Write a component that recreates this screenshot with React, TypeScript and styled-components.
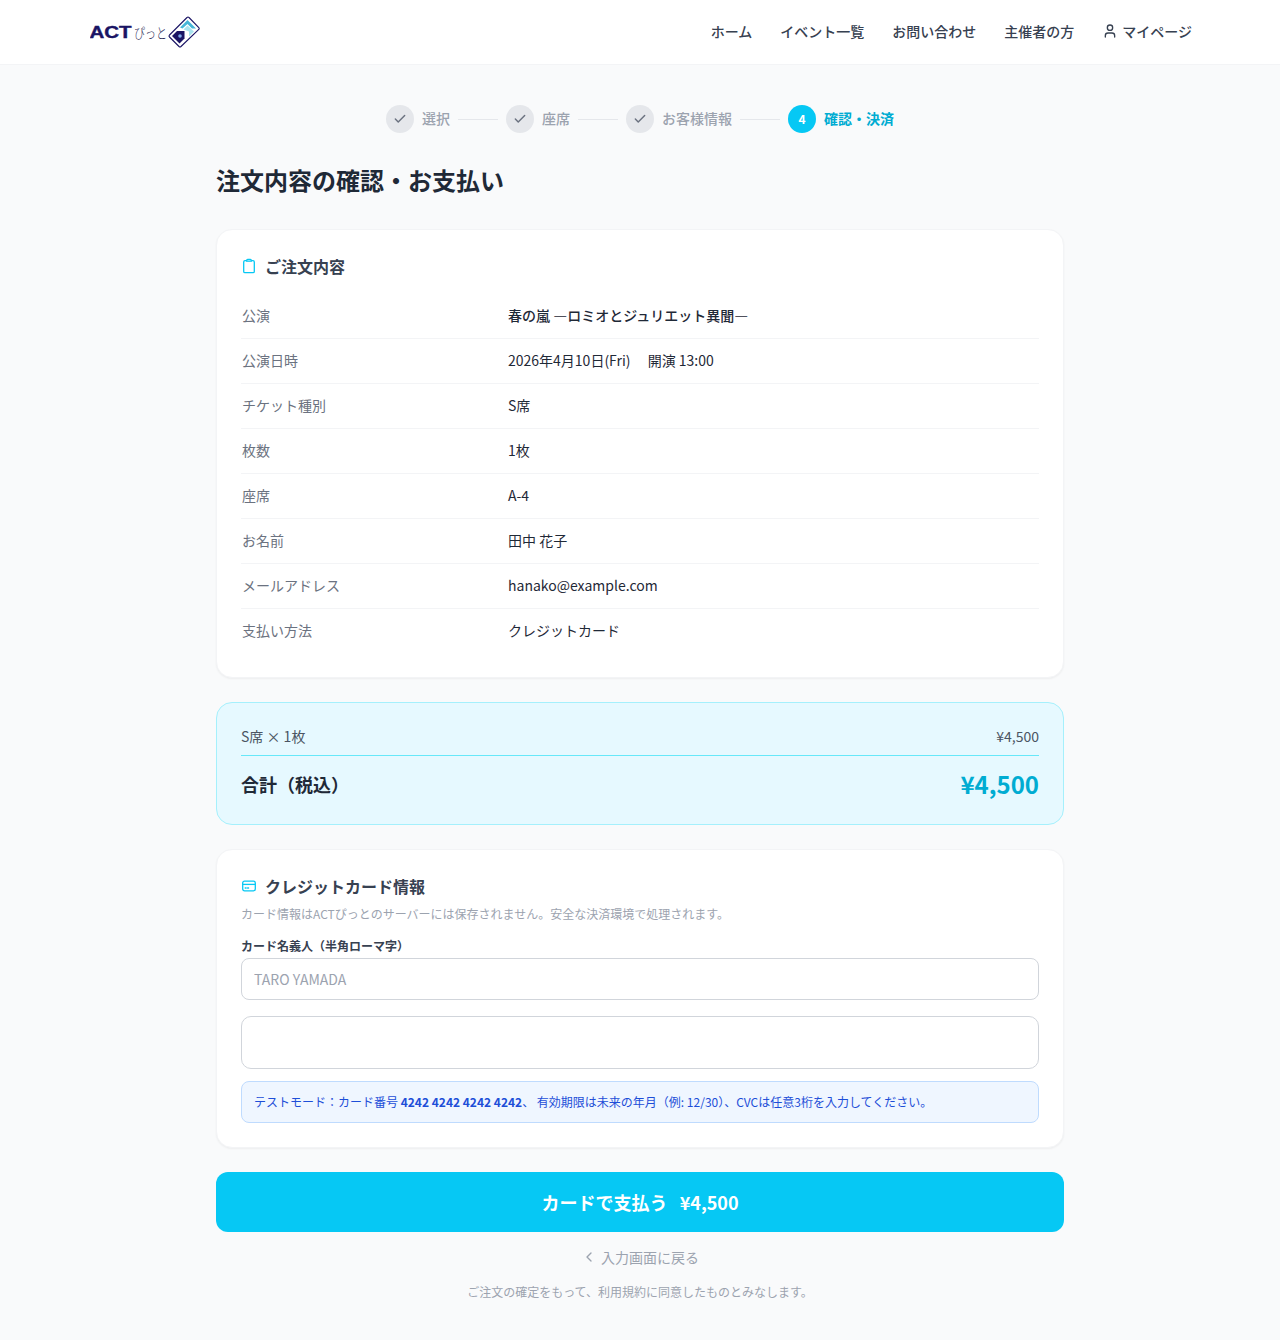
import React from "react";
import styled, { createGlobalStyle } from "styled-components";
import { Check, ChevronLeft, User } from "lucide-react";

const Global = createGlobalStyle`
  html, body { margin: 0; padding: 0; }
  body {
    background: #f9fafb;
    font-family: "Noto Sans CJK JP", "Noto Sans", sans-serif;
    color: #1f2937;
  }
  * { box-sizing: border-box; }
`;

const Page = styled.div`
  min-height: 1340px;
  background: #f9fafb;
`;
const Header = styled.header`
  height: 65px;
  background: #fff;
  border-bottom: 1px solid #f3f4f6;
  display: flex;
  align-items: center;
  justify-content: space-between;
  padding: 0 88px 2px 90px;
`;
const LogoWrap = styled.a`
  display: block;
  width: 110px;
  height: 32px;
  margin-top: 2px;
`;
const Nav = styled.nav`
  display: flex;
  align-items: center;
  gap: 28px;
`;
const NavItem = styled.a`
  display: flex;
  align-items: center;
  gap: 4px;
  font-size: 14px;
  font-weight: 500;
  color: #374151;
  line-height: 20px;
`;
const Main = styled.main`
  width: 848px;
  margin: 0 auto;
  padding-top: 40px;
`;
const Stepper = styled.ol`
  display: flex;
  justify-content: center;
  align-items: center;
  list-style: none;
  margin: 0 0 31px;
  padding: 0;
`;
const Step = styled.li`
  display: flex;
  align-items: center;
`;
const StepCircle = styled.span<{ $active?: boolean }>`
  width: 28px;
  height: 28px;
  border-radius: 50%;
  display: flex;
  align-items: center;
  justify-content: center;
  padding-bottom: ${(p) => (p.$active ? "2px" : "0")};
  background: ${(p) => (p.$active ? "#06c8f4" : "#e5e7eb")};
  color: ${(p) => (p.$active ? "#fff" : "#6b7280")};
  font-size: 12px;
  font-weight: 700;
`;
const StepLabel = styled.span<{ $active?: boolean }>`
  margin: 0 0 2px 8px;
  font-size: 14px;
  line-height: 20px;
  font-weight: ${(p) => (p.$active ? 700 : 500)};
  color: ${(p) => (p.$active ? "#00acd2" : "#9ca3af")};
`;
const StepLine = styled.span`
  display: block;
  width: 40px;
  height: 1px;
  background: #e5e7eb;
  margin: 0 8px;
`;
const Title = styled.h1`
  margin: 0 0 33px;
  font-size: 24px;
  line-height: 32px;
  font-weight: 700;
  color: #1f2937;
`;
const Card = styled.section`
  background: #fff;
  border-radius: 16px;
  border: 1px solid #f3f4f6;
  box-shadow: 0 1px 2px rgba(0, 0, 0, 0.05);
  padding: 24px;
  margin-bottom: 24px;
`;
const CardTitle = styled.h2<{ $tight?: boolean }>`
  display: flex;
  align-items: center;
  gap: 8px;
  margin: 0 0 ${(p) => (p.$tight ? "7px" : "16px")};
  font-size: 16px;
  line-height: 24px;
  font-weight: 700;
  color: #374151;
  svg { flex: none; color: #06c8f4; }
`;
const Rows = styled.dl`
  margin: 0;
`;
const Row = styled.div<{ $last?: boolean }>`
  display: flex;
  font-size: 14px;
  line-height: 20px;
  padding: 11px 0 0;
  height: ${(p) => (p.$last ? "44px" : "45px")};
  border-bottom: ${(p) => (p.$last ? "none" : "1px solid #f3f4f6")};
`;
const RowLabel = styled.dt`
  width: 267px;
  padding-left: 1px;
  color: #6b7280;
`;
const RowValue = styled.dd<{ $bold?: boolean }>`
  margin: 0;
  color: #1f2937;
  white-space: pre;
  font-weight: ${(p) => (p.$bold ? 500 : 400)};
`;
const Summary = styled.section`
  background: #e6f9ff;
  border: 1px solid #a5f0fc;
  border-radius: 16px;
  padding: 24px;
  margin-bottom: 24px;
  height: 123px;
`;
const SummaryRow = styled.div`
  display: flex;
  justify-content: space-between;
  font-size: 14px;
  line-height: 20px;
  color: #4b5563;
  padding-bottom: 8px;
  margin-top: -1px;
  border-bottom: 1px solid #67e8f9;
  height: 30px;
`;
const TotalRow = styled.div`
  display: flex;
  justify-content: space-between;
  align-items: center;
  height: 56px;
`;
const TotalLabel = styled.span`
  font-size: 18px;
  font-weight: 700;
  color: #1f2937;
`;
const TotalPrice = styled.span`
  font-size: 24px;
  font-weight: 700;
  color: #00acd2;
  margin-bottom: 2px;
`;
const Desc = styled.p`
  margin: 0 0 15px;
  font-size: 12px;
  line-height: 18px;
  color: #9ca3af;
`;
const FieldLabel = styled.label`
  display: block;
  font-size: 12px;
  line-height: 16px;
  font-weight: 700;
  color: #374151;
  margin-bottom: 4px;
`;
const Input = styled.input`
  display: block;
  width: 100%;
  height: 42px;
  border: 1px solid #d1d5db;
  border-radius: 8px;
  padding: 0 12px;
  font: inherit;
  font-size: 14px;
  background: #fff;
  margin-bottom: 16px;
  &::placeholder { color: #9ca3af; opacity: 1; }
`;
const StripeBox = styled.div`
  height: 53px;
  border: 1px solid #d1d5db;
  border-radius: 10px;
  background: #fff;
  margin-bottom: 12px;
`;
const Notice = styled.p`
  margin: 0;
  height: 42px;
  display: flex;
  align-items: center;
  padding: 0 12px 2px;
  background: #eff6ff;
  border: 1px solid #bfdbfe;
  border-radius: 8px;
  font-size: 12px;
  color: #1d4ed8;
  white-space: pre;
  b { font-weight: 700; }
`;
const PayButton = styled.button`
  display: block;
  width: 100%;
  height: 60px;
  border: none;
  border-radius: 12px;
  background: #06c8f4;
  color: #fff;
  font: inherit;
  font-size: 18px;
  font-weight: 700;
`;
const BackLink = styled.a`
  display: flex;
  justify-content: center;
  align-items: center;
  gap: 4px;
  margin-top: 15px;
  font-size: 14px;
  line-height: 20px;
  color: #9ca3af;
`;
const Note = styled.p`
  margin: 16px 0 0;
  text-align: center;
  font-size: 12px;
  line-height: 18px;
  color: #9ca3af;
`;

const Logo = () => (
  <svg width="110" height="32" viewBox="0 0 110 32" aria-label="ACTぴっと">
    <text x="-0.5" y="22" fontFamily="'Liberation Sans', sans-serif" fontWeight="700" fontSize="16" fill="#1a1464" stroke="#1a1464" strokeWidth="0.4" textLength="42" lengthAdjust="spacingAndGlyphs">ACT</text>
    <text x="44" y="22" fontFamily="'Noto Sans CJK JP', sans-serif" fontWeight="300" fontSize="13.5" fill="#2a2a55" textLength="33" lengthAdjust="spacingAndGlyphs">ぴっと</text>
    <path d="M79.5 19 L97 1.5 Q98 0.6 99 1.5 L108.8 11.5 Q109.6 12.5 108.8 13.5 L91 30.5 Q90 31.3 89 30.5 L79.5 21 Q78.6 20 79.5 19 Z" fill="#fff" stroke="#1a1464" strokeWidth="1.1" />
    <path d="M90 11.5 L97.5 4 L106 12.5 L102 12.5 L97.5 8 L92.5 12.5 Z" fill="#45b5d8" />
    <path d="M93.5 13.5 L97.5 9.5 L104 15.5 L99 20.5 L99 15.5 Z" fill="#a9e3ef" />
    <path d="M82 20 L87 15 L94.5 15 L94.5 22.5 L89.5 27.5 Z" fill="#1a1464" />
    <circle cx="90" cy="20" r="1.8" fill="#7fa8e8" />
  </svg>
);

const ClipIcon = () => (
  <svg width="16" height="16" viewBox="0 0 16 16" fill="none" stroke="currentColor" strokeWidth="1.3">
    <rect x="2.7" y="2.7" width="10.6" height="12" rx="1.3" />
    <path d="M5.7 3.2V2.2a.9.9 0 0 1 .9-.9h2.8a.9.9 0 0 1 .9.9v1z" fill="#fff" />
  </svg>
);
const CardIcon = () => (
  <svg width="16" height="16" viewBox="0 0 16 16" fill="none" stroke="currentColor" strokeWidth="1.3">
    <rect x="1.7" y="3.2" width="12.6" height="9.6" rx="1.8" />
    <path d="M1.7 6.4h12.6" />
    <path d="M4.2 10h1M6.6 10h1" strokeLinecap="round" />
  </svg>
);

const steps = ["選択", "座席", "お客様情報"];
const rows: [string, string][] = [
  ["公演", "春の嵐 ―ロミオとジュリエット異聞―"],
  ["公演日時", "2026年4月10日(Fri)\u3000 開演 13:00"],
  ["チケット種別", "S席"],
  ["枚数", "1枚"],
  ["座席", "A-4"],
  ["お名前", "田中 花子"],
  ["メールアドレス", "hanako@example.com"],
  ["支払い方法", "クレジットカード"],
];

export default function App() {
  return (
    <Page>
      <Global />
      <Header>
        <LogoWrap><Logo /></LogoWrap>
        <Nav>
          <NavItem>ホーム</NavItem>
          <NavItem>イベント一覧</NavItem>
          <NavItem>お問い合わせ</NavItem>
          <NavItem>主催者の方</NavItem>
          <NavItem><User size={16} />マイページ</NavItem>
        </Nav>
      </Header>
      <Main>
        <Stepper>
          {steps.map((s) => (
            <React.Fragment key={s}>
              <Step>
                <StepCircle><Check size={14} strokeWidth={2.5} /></StepCircle>
                <StepLabel>{s}</StepLabel>
              </Step>
              <StepLine />
            </React.Fragment>
          ))}
          <Step>
            <StepCircle $active>4</StepCircle>
            <StepLabel $active>確認・決済</StepLabel>
          </Step>
        </Stepper>
        <Title>注文内容の確認・お支払い</Title>
        <Card>
          <CardTitle><ClipIcon />ご注文内容</CardTitle>
          <Rows>
            {rows.map(([k, v], i) => (
              <Row key={k} $last={i === rows.length - 1}>
                <RowLabel>{k}</RowLabel>
                <RowValue $bold={i === 0}>{v}</RowValue>
              </Row>
            ))}
          </Rows>
        </Card>
        <Summary>
          <SummaryRow><span>S席 × 1枚</span><span>¥4,500</span></SummaryRow>
          <TotalRow><TotalLabel>合計（税込）</TotalLabel><TotalPrice>¥4,500</TotalPrice></TotalRow>
        </Summary>
        <Card>
          <CardTitle $tight><CardIcon />クレジットカード情報</CardTitle>
          <Desc>カード情報はACTぴっとのサーバーには保存されません。安全な決済環境で処理されます。</Desc>
          <FieldLabel>カード名義人（半角ローマ字）</FieldLabel>
          <Input placeholder="TARO YAMADA" />
          <StripeBox />
          <Notice>テストモード：カード番号 <b>4242 4242 4242 4242</b>、 有効期限は未来の年月（例: 12/30）、CVCは任意3桁を入力してください。</Notice>
        </Card>
        <PayButton>カードで支払う &nbsp;&nbsp;¥4,500</PayButton>
        <BackLink><ChevronLeft size={16} />入力画面に戻る</BackLink>
        <Note>ご注文の確定をもって、利用規約に同意したものとみなします。</Note>
      </Main>
    </Page>
  );
}
